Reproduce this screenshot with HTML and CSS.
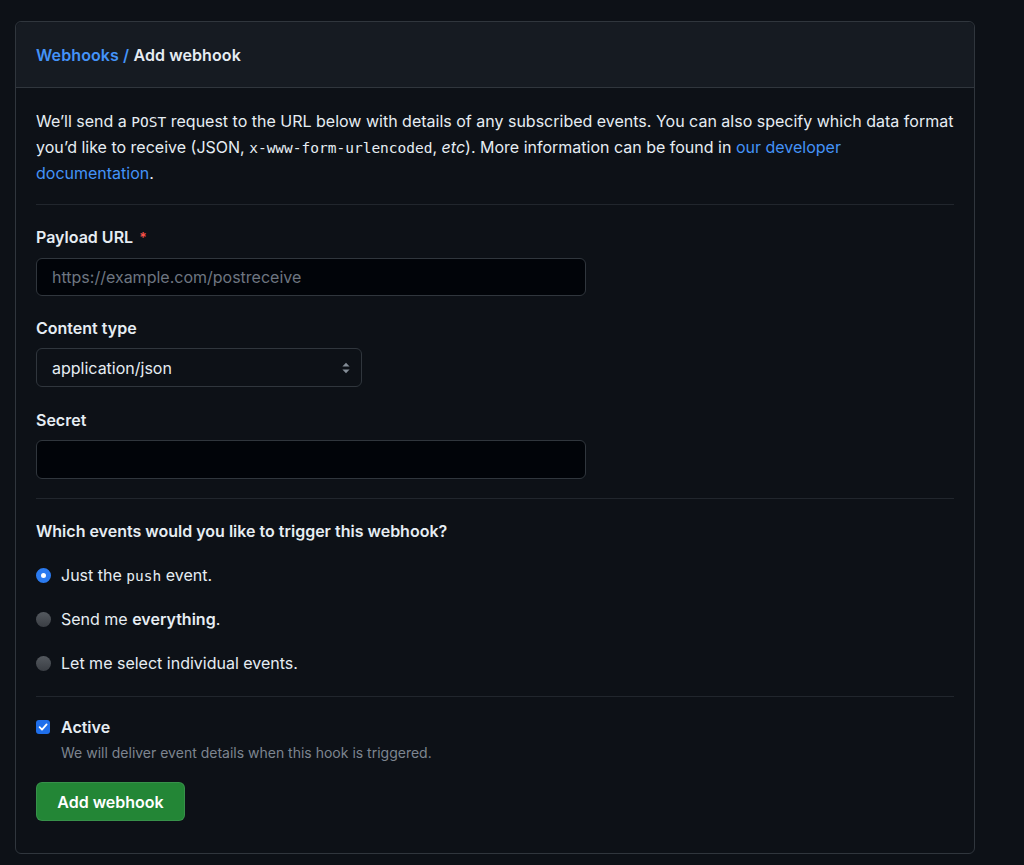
FILE: index.html
```html
<!DOCTYPE html>
<html>
<head>
	<title>Add webhook</title>
	<link rel="stylesheet" href="styles.css">
</head>
<body>
<div class="box">
	<div class="box-header">
		<h2><a href="#">Webhooks</a><span class="sep"> / </span>Add webhook</h2>
	</div>
	<div class="box-body">
		<p class="intro">We’ll send a <code>POST</code> request to the URL below with details of any subscribed events. You can also specify which data format you’d like to receive (JSON, <code>x-www-form-urlencoded</code>, <em>etc</em>). More information can be found in <a href="#">our developer documentation</a>.</p>
		<hr>
		<div class="field">
			<label>Payload URL <span class="req">*</span></label>
			<input type="text" class="input wide url" placeholder="https://example.com/postreceive">
		</div>
		<div class="field type">
			<label>Content type</label>
			<div class="select-wrap">
				<select class="input select">
					<option>application/json</option>
					<option>application/x-www-form-urlencoded</option>
				</select>
				<svg class="select-arrow" width="16" height="16" viewBox="0 0 16 16"><path d="M4.4 6.6 8 2.8l3.6 3.8z" fill="#848d97"/><path d="M4.4 9.4 8 13.2l3.6-3.8z" fill="#848d97"/></svg>
			</div>
		</div>
		<div class="field secret">
			<label>Secret</label>
			<input type="text" class="input wide">
		</div>
		<hr>
		<h3>Which events would you like to trigger this webhook?</h3>
		<ul class="radios">
			<li><span class="radio on"></span><span>Just the <code>push</code> event.</span></li>
			<li><span class="radio"></span><span>Send me <strong>everything</strong>.</span></li>
			<li><span class="radio"></span><span>Let me select individual events.</span></li>
		</ul>
		<hr class="last">
		<div class="check-row">
			<span class="check"><svg width="10" height="10" viewBox="0 0 10 10"><path d="M1.6 5.2 4 7.6 8.6 2.4" fill="none" stroke="#fff" stroke-width="1.8" stroke-linecap="round" stroke-linejoin="round"/></svg></span>
			<div>
				<div class="check-label">Active</div>
				<p class="note">We will deliver event details when this hook is triggered.</p>
			</div>
		</div>
		<button class="btn-primary">Add webhook</button>
	</div>
</div>
</body>
</html>
```

FILE: styles.css
```css
*{
	margin: 0;
	padding: 0;
	box-sizing: border-box;
}
body{
	background: #0d1117;
	color: #e6edf3;
	font-family: Inter, "Noto Sans", "Liberation Sans", sans-serif;
	font-size: 16px;
	padding: 21px 0 0 15px;
}
a{
	color: #4493f8;
	text-decoration: none;
}
code{
	font-family: "DejaVu Sans Mono", "Liberation Mono", monospace;
	font-size: 14.5px;
	line-height: 1;
}
.box{
	width: 960px;
	border: 1px solid #30363d;
	border-radius: 6px;
}
.box-header{
	height: 66px;
	background: #161b22;
	border-bottom: 1px solid #30363d;
	border-radius: 6px 6px 0 0;
	padding: 0 20px;
	display: flex;
	align-items: center;
}
.box-header h2{
	font-size: 16px;
	font-weight: 600;
	line-height: 24px;
	letter-spacing: 0.1px;
}
.box-header .sep{
	color: #4493f8;
}
.box-body{
	padding: 20px 20px 32px;
}
.intro{
	line-height: 26px;
}
hr{
	border: none;
	border-top: 1px solid #21262d;
	margin: 18px 0 20px;
}
hr.last{
	margin-top: 21px;
}
.field{
	margin-bottom: 20px;
}
.field.type{
	margin-bottom: 21px;
}
.field.secret{
	margin-bottom: 19px;
}
label{
	display: block;
	font-weight: 600;
	line-height: 24px;
	margin-bottom: 8px;
}
.req{
	color: #f85149;
	font-size: 14px;
	margin-left: 2px;
}
.input{
	height: 39px;
	background: #010409;
	border: 1px solid #30363d;
	border-radius: 6px;
	color: #e6edf3;
	font-family: inherit;
	font-size: 16px;
	padding: 0 15px;
	outline: none;
}
.input.url{
	height: 38px;
}
.input::placeholder{
	color: #6e7681;
}
.wide{
	width: 550px;
	display: block;
}
.select-wrap{
	width: 326px;
	position: relative;
}
.select{
	width: 326px;
	display: block;
	background: #0d1117;
	appearance: none;
}
.select-arrow{
	position: absolute;
	right: 8px;
	top: 12px;
}
h3{
	font-size: 16px;
	font-weight: 600;
	line-height: 24px;
}
.radios{
	list-style: none;
	margin-top: 20px;
}
.radios li{
	display: flex;
	align-items: center;
	height: 24px;
	line-height: 24px;
	margin-bottom: 20px;
}
.radios li:last-child{
	margin-bottom: 0;
}
.radios code{
	font-size: 14.5px;
}
.radios strong{
	font-weight: 600;
}
.radio{
	width: 15px;
	height: 15px;
	border-radius: 50%;
	background: linear-gradient(#54595f, #3a3e44);
	margin: 0 10px 0 0;
}
.radio.on{
	border: 5px solid #2b7bf0;
	background: #fff;
}
.check-row{
	display: flex;
	align-items: flex-start;
	margin-top: -2px;
}
.check{
	width: 14px;
	height: 14px;
	border-radius: 3px;
	background: #1f6feb;
	display: flex;
	align-items: center;
	justify-content: center;
	margin: 5px 11px 0 0;
}
.check-label{
	font-weight: 600;
	line-height: 24px;
}
.note{
	color: #7d8590;
	font-size: 14px;
	line-height: 22px;
	margin-top: 3px;
}
.btn-primary{
	margin-top: 18px;
	width: 149px;
	height: 39px;
	background: #238636;
	border: 1px solid rgba(240,246,252,0.1);
	border-radius: 6px;
	color: #fff;
	font-family: inherit;
	font-size: 16px;
	font-weight: 600;
}
```
